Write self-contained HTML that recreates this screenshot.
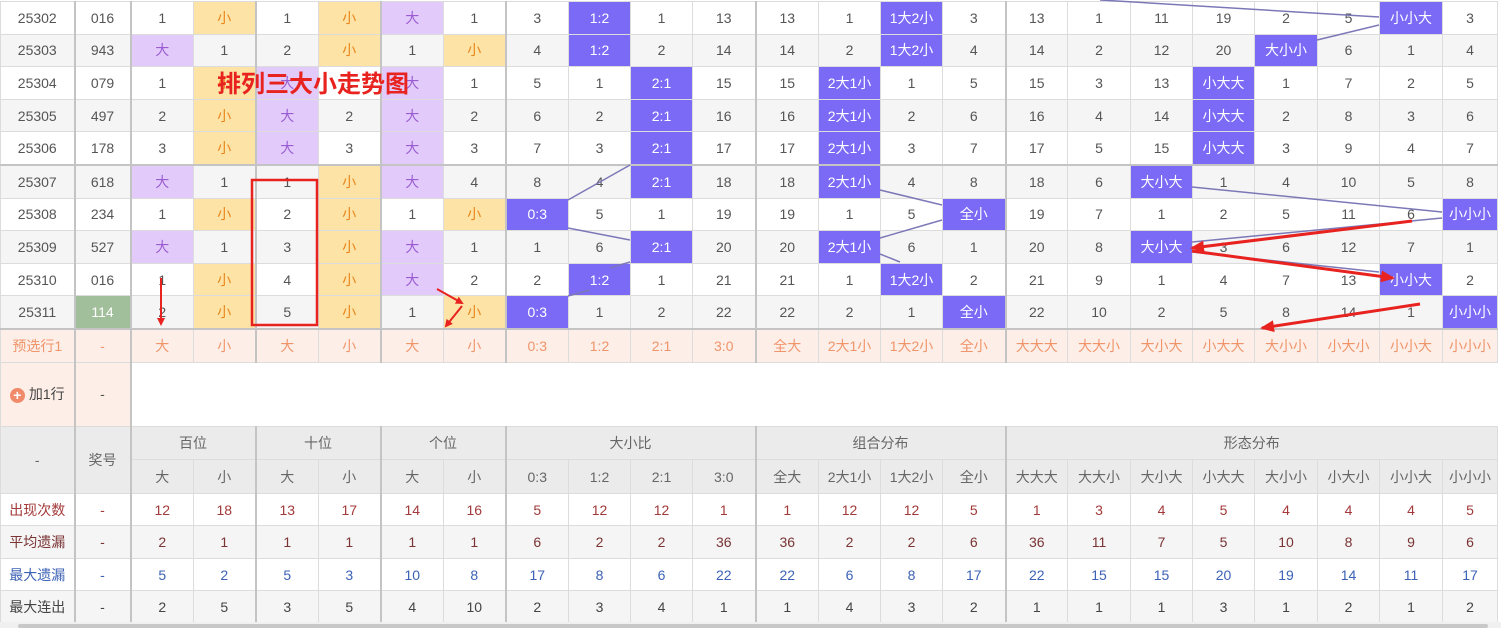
<!DOCTYPE html>
<html><head><meta charset="utf-8">
<style>
body{margin:0;width:1501px;height:628px;overflow:hidden;background:#fff;position:relative;font-family:"Liberation Sans","Noto Sans CJK SC",sans-serif;}
table{border-collapse:collapse;table-layout:fixed;position:absolute;left:0;top:0;width:1497px;font-size:14px;color:#555;}
td{border:1px solid #dcdcdc;text-align:center;padding:0;white-space:nowrap;overflow:hidden;}
tr.r td{height:31.6px;}
tr.g td{background:#f5f5f5;}
td.L{border-left:2px solid #c4c4c4;}
tr.sep td{border-top:2px solid #c4c4c4;}
td.d{background:#e2cafb !important;color:#9a5cd0;}
td.x{background:#fde3a6 !important;color:#e8851a;}
td.p{background:#7a6af6 !important;color:#fff;}
td.gr{background:#a2bf9b !important;color:#fff;}
tr.pre td{background:#fdeee7;color:#f0946a;height:32px;border-top:2px solid #c4c4c4;}
tr.add td{height:63px;}
tr.add td.pk{background:#fdeee7;}
tr.h td{background:#ebebeb;color:#666;height:32.5px;}
tr.s td{height:31.5px;}
tr.s.g td{background:#f5f5f5;}
.c1{color:#a33a3a}.c2{color:#7a3434}.c3{color:#3c62b5}
.plus{display:inline-block;width:15px;height:15px;border-radius:50%;background:#f08a6a;color:#fff;font-size:14px;line-height:15px;font-weight:bold;vertical-align:middle;margin-right:4px;}
svg{position:absolute;left:0;top:0;}
.title{position:absolute;left:217px;top:64px;color:#e8231f;font-weight:bold;font-size:24px;font-family:"Liberation Sans","Noto Sans CJK SC",sans-serif;}
.sb{position:absolute;left:0;top:622px;width:1501px;height:6px;background:#f0f0f0;}
.sb div{position:absolute;left:18px;top:2px;width:1470px;height:4px;background:#c8c8c8;border-radius:2px;}
</style></head><body>
<table>
<colgroup><col style="width:74px"><col style="width:56px"><col style="width:63px"><col style="width:62px"><col style="width:63px"><col style="width:62px"><col style="width:63px"><col style="width:62px"><col style="width:63px"><col style="width:62px"><col style="width:62px"><col style="width:63px"><col style="width:63px"><col style="width:62px"><col style="width:62px"><col style="width:63px"><col style="width:62px"><col style="width:63px"><col style="width:62px"><col style="width:62px"><col style="width:63px"><col style="width:62px"><col style="width:63px"><col style="width:55px"></colgroup>
<tr><td style="height:1px;border:0" colspan="24"></td></tr>
<tr class="r"><td>25302</td><td class="L">016</td><td class="L">1</td><td class="x">小</td><td class="L">1</td><td class="x">小</td><td class="L d">大</td><td>1</td><td class="L">3</td><td class="p">1:2</td><td>1</td><td>13</td><td class="L">13</td><td>1</td><td class="p">1大2小</td><td>3</td><td class="L">13</td><td>1</td><td>11</td><td>19</td><td>2</td><td>5</td><td class="p">小小大</td><td>3</td></tr>
<tr class="r g"><td>25303</td><td class="L">943</td><td class="L d">大</td><td>1</td><td class="L">2</td><td class="x">小</td><td class="L">1</td><td class="x">小</td><td class="L">4</td><td class="p">1:2</td><td>2</td><td>14</td><td class="L">14</td><td>2</td><td class="p">1大2小</td><td>4</td><td class="L">14</td><td>2</td><td>12</td><td>20</td><td class="p">大小小</td><td>6</td><td>1</td><td>4</td></tr>
<tr class="r"><td>25304</td><td class="L">079</td><td class="L">1</td><td class="x">小</td><td class="L d">大</td><td>1</td><td class="L d">大</td><td>1</td><td class="L">5</td><td>1</td><td class="p">2:1</td><td>15</td><td class="L">15</td><td class="p">2大1小</td><td>1</td><td>5</td><td class="L">15</td><td>3</td><td>13</td><td class="p">小大大</td><td>1</td><td>7</td><td>2</td><td>5</td></tr>
<tr class="r g"><td>25305</td><td class="L">497</td><td class="L">2</td><td class="x">小</td><td class="L d">大</td><td>2</td><td class="L d">大</td><td>2</td><td class="L">6</td><td>2</td><td class="p">2:1</td><td>16</td><td class="L">16</td><td class="p">2大1小</td><td>2</td><td>6</td><td class="L">16</td><td>4</td><td>14</td><td class="p">小大大</td><td>2</td><td>8</td><td>3</td><td>6</td></tr>
<tr class="r"><td>25306</td><td class="L">178</td><td class="L">3</td><td class="x">小</td><td class="L d">大</td><td>3</td><td class="L d">大</td><td>3</td><td class="L">7</td><td>3</td><td class="p">2:1</td><td>17</td><td class="L">17</td><td class="p">2大1小</td><td>3</td><td>7</td><td class="L">17</td><td>5</td><td>15</td><td class="p">小大大</td><td>3</td><td>9</td><td>4</td><td>7</td></tr>
<tr class="r g sep"><td>25307</td><td class="L">618</td><td class="L d">大</td><td>1</td><td class="L">1</td><td class="x">小</td><td class="L d">大</td><td>4</td><td class="L">8</td><td>4</td><td class="p">2:1</td><td>18</td><td class="L">18</td><td class="p">2大1小</td><td>4</td><td>8</td><td class="L">18</td><td>6</td><td class="p">大小大</td><td>1</td><td>4</td><td>10</td><td>5</td><td>8</td></tr>
<tr class="r"><td>25308</td><td class="L">234</td><td class="L">1</td><td class="x">小</td><td class="L">2</td><td class="x">小</td><td class="L">1</td><td class="x">小</td><td class="L p">0:3</td><td>5</td><td>1</td><td>19</td><td class="L">19</td><td>1</td><td>5</td><td class="p">全小</td><td class="L">19</td><td>7</td><td>1</td><td>2</td><td>5</td><td>11</td><td>6</td><td class="p">小小小</td></tr>
<tr class="r g"><td>25309</td><td class="L">527</td><td class="L d">大</td><td>1</td><td class="L">3</td><td class="x">小</td><td class="L d">大</td><td>1</td><td class="L">1</td><td>6</td><td class="p">2:1</td><td>20</td><td class="L">20</td><td class="p">2大1小</td><td>6</td><td>1</td><td class="L">20</td><td>8</td><td class="p">大小大</td><td>3</td><td>6</td><td>12</td><td>7</td><td>1</td></tr>
<tr class="r"><td>25310</td><td class="L">016</td><td class="L">1</td><td class="x">小</td><td class="L">4</td><td class="x">小</td><td class="L d">大</td><td>2</td><td class="L">2</td><td class="p">1:2</td><td>1</td><td>21</td><td class="L">21</td><td>1</td><td class="p">1大2小</td><td>2</td><td class="L">21</td><td>9</td><td>1</td><td>4</td><td>7</td><td>13</td><td class="p">小小大</td><td>2</td></tr>
<tr class="r g"><td>25311</td><td class="L gr">114</td><td class="L">2</td><td class="x">小</td><td class="L">5</td><td class="x">小</td><td class="L">1</td><td class="x">小</td><td class="L p">0:3</td><td>1</td><td>2</td><td>22</td><td class="L">22</td><td>2</td><td>1</td><td class="p">全小</td><td class="L">22</td><td>10</td><td>2</td><td>5</td><td>8</td><td>14</td><td>1</td><td class="p">小小小</td></tr>
<tr class="pre"><td>预选行1</td><td class="L">-</td><td class="L">大</td><td>小</td><td class="L">大</td><td>小</td><td class="L">大</td><td>小</td><td class="L">0:3</td><td>1:2</td><td>2:1</td><td>3:0</td><td class="L">全大</td><td>2大1小</td><td>1大2小</td><td>全小</td><td class="L">大大大</td><td>大大小</td><td>大小大</td><td>小大大</td><td>大小小</td><td>小大小</td><td>小小大</td><td>小小小</td></tr>
<tr class="add"><td class="pk" style="color:#444"><span class="plus">+</span>加1行</td><td class="L pk">-</td><td class="L" colspan="22" style="border-right:0"></td></tr>
<tr class="h"><td rowspan="2">-</td><td class="L" rowspan="2">奖号</td><td class="L" colspan="2">百位</td><td class="L" colspan="2">十位</td><td class="L" colspan="2">个位</td><td class="L" colspan="4">大小比</td><td class="L" colspan="4">组合分布</td><td class="L" colspan="8">形态分布</td></tr>
<tr class="h"><td class="L">大</td><td>小</td><td class="L">大</td><td>小</td><td class="L">大</td><td>小</td><td class="L">0:3</td><td>1:2</td><td>2:1</td><td>3:0</td><td class="L">全大</td><td>2大1小</td><td>1大2小</td><td>全小</td><td class="L">大大大</td><td>大大小</td><td>大小大</td><td>小大大</td><td>大小小</td><td>小大小</td><td>小小大</td><td>小小小</td></tr>
<tr class="s c1"><td>出现次数</td><td class="L">-</td><td class="L">12</td><td>18</td><td class="L">13</td><td>17</td><td class="L">14</td><td>16</td><td class="L">5</td><td>12</td><td>12</td><td>1</td><td class="L">1</td><td>12</td><td>12</td><td>5</td><td class="L">1</td><td>3</td><td>4</td><td>5</td><td>4</td><td>4</td><td>4</td><td>5</td></tr>
<tr class="s g c2"><td>平均遗漏</td><td class="L">-</td><td class="L">2</td><td>1</td><td class="L">1</td><td>1</td><td class="L">1</td><td>1</td><td class="L">6</td><td>2</td><td>2</td><td>36</td><td class="L">36</td><td>2</td><td>2</td><td>6</td><td class="L">36</td><td>11</td><td>7</td><td>5</td><td>10</td><td>8</td><td>9</td><td>6</td></tr>
<tr class="s c3"><td>最大遗漏</td><td class="L">-</td><td class="L">5</td><td>2</td><td class="L">5</td><td>3</td><td class="L">10</td><td>8</td><td class="L">17</td><td>8</td><td>6</td><td>22</td><td class="L">22</td><td>6</td><td>8</td><td>17</td><td class="L">22</td><td>15</td><td>15</td><td>20</td><td>19</td><td>14</td><td>11</td><td>17</td></tr>
<tr class="s g" style="color:#444"><td>最大连出</td><td class="L">-</td><td class="L">2</td><td>5</td><td class="L">3</td><td>5</td><td class="L">4</td><td>10</td><td class="L">2</td><td>3</td><td>4</td><td>1</td><td class="L">1</td><td>4</td><td>3</td><td>2</td><td class="L">1</td><td>1</td><td>1</td><td>3</td><td>1</td><td>2</td><td>1</td><td>2</td></tr>
</table>
<svg width="1501" height="628" style="z-index:2">
<defs><marker id="ah" markerWidth="8" markerHeight="8" refX="6" refY="4" orient="auto" markerUnits="userSpaceOnUse"><path d="M0,0 L8,4 L0,8 Z" fill="#e8231f"/></marker>
<marker id="ah2" markerWidth="14" markerHeight="12" refX="12" refY="6" orient="auto" markerUnits="userSpaceOnUse"><path d="M0,0 L14,6 L0,12 Z" fill="#e8231f"/></marker></defs>
<g stroke="#7c78b8" stroke-width="1.5" fill="none">
<line x1="630" y1="165" x2="568" y2="200"/><line x1="568" y1="228" x2="630" y2="240"/><line x1="630" y1="262" x2="610" y2="268"/><line x1="568" y1="296" x2="590" y2="290"/>
<line x1="880" y1="190" x2="942" y2="205"/><line x1="942" y1="220" x2="880" y2="238"/><line x1="880" y1="254" x2="900" y2="262"/>
<line x1="1100" y1="0" x2="1379" y2="17"/><line x1="1317" y1="40" x2="1379" y2="25"/>
<line x1="1192" y1="187" x2="1442" y2="212"/><line x1="1442" y1="218" x2="1192" y2="242"/><line x1="1192" y1="252" x2="1379" y2="272"/>
</g>
<rect x="252" y="180" width="65" height="145" fill="none" stroke="#e8231f" stroke-width="2.5"/>
<g stroke="#e8231f" fill="none" stroke-width="2">
<line x1="161" y1="278" x2="161" y2="324" marker-end="url(#ah)"/>
<line x1="437" y1="289" x2="462" y2="303" marker-end="url(#ah)"/>
<line x1="462" y1="306" x2="446" y2="326" marker-end="url(#ah)"/>
</g>
<g stroke="#e8231f" fill="none" stroke-width="3">
<line x1="1412" y1="221" x2="1192" y2="248" marker-end="url(#ah2)"/>
<line x1="1192" y1="251" x2="1393" y2="278" marker-end="url(#ah2)"/>
<line x1="1420" y1="304" x2="1262" y2="328" marker-end="url(#ah2)"/>
</g>
</svg>
<div class="title" style="z-index:3">排列三大小走势图</div>
<div class="sb"><div></div></div>
</body></html>
